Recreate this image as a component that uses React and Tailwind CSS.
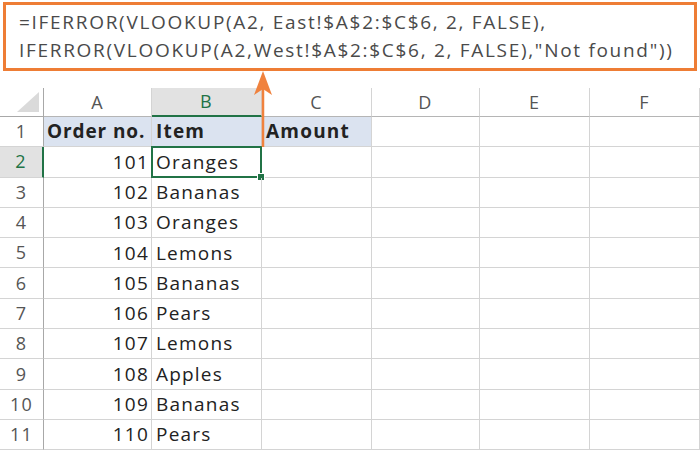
import React from "react";

const cols = ["A", "B", "C", "D", "E", "F"];

const rows = [
  ["101", "Oranges"],
  ["102", "Bananas"],
  ["103", "Oranges"],
  ["104", "Lemons"],
  ["105", "Bananas"],
  ["106", "Pears"],
  ["107", "Lemons"],
  ["108", "Apples"],
  ["109", "Bananas"],
  ["110", "Pears"],
];

const cell = "border-r border-b border-[#d4d4d4] h-[30.3px] flex items-center";

const App = () => {
  return (
    <div className="relative w-[700px] h-[450px] overflow-hidden bg-white font-['Open_Sans',sans-serif]">
      {/* formula box */}
      <div className="mx-[3px] mt-[2px] h-[69px] border-[3px] border-[#ee7d35] px-[13px] pt-[3px] text-[19px] leading-[28px] text-[#4a4a4a] tracking-[1.7px] whitespace-nowrap">
        <div>=IFERROR(VLOOKUP(A2, East!$A$2:$C$6, 2, FALSE),</div>
        <div>IFERROR(VLOOKUP(A2,West!$A$2:$C$6, 2, FALSE),"Not found"))</div>
      </div>

      <div className="mt-[17px] grid grid-cols-[44px_108px_110px_110px_108px_110px_110px] text-[19px] text-[#222] tracking-[1.2px]">
        {/* column header row */}
        <div className="h-[29px] border-r border-b border-[#a8a8a8] flex items-end justify-end pr-[4px] pb-[4px]">
          <svg width="22" height="20" viewBox="0 0 22 20">
            <polygon points="22,0 22,20 0,20" fill="#dadada" />
          </svg>
        </div>
        {cols.map((c) => (
          <div
            key={c}
            className={
              c === "B"
                ? "h-[29px] bg-[#e2e2e2] border-b-[2px] border-[#217346] border-r border-r-[#d4d4d4] flex items-center justify-center text-[18px] text-[#217346]"
                : "h-[29px] border-b border-r border-b-[#b5b5b5] border-r-[#d4d4d4] flex items-center justify-center text-[18px] text-[#555]"
            }
          >
            {c}
          </div>
        ))}

        {/* row 1 */}
        <div className={cell + " justify-center border-r-[#a8a8a8] text-[#555] text-[18px]"}>1</div>
        <div className={cell + " bg-[#dbe3f0] font-bold px-[3px] tracking-[0.9px]"}>Order no.</div>
        <div className={cell + " bg-[#dbe3f0] font-bold px-[4px]"}>Item</div>
        <div className={cell + " bg-[#dbe3f0] font-bold px-[4px]"}>Amount</div>
        <div className={cell}></div>
        <div className={cell}></div>
        <div className={cell}></div>

        {rows.map(([n, item], i) => {
          const r = i + 2;
          const sel = r === 2;
          return (
            <React.Fragment key={r}>
              <div
                className={
                  sel
                    ? "h-[30.3px] flex items-center justify-center bg-[#e2e2e2] border-r-[2px] border-[#217346] border-b border-b-[#d4d4d4] text-[#217346] text-[18px]"
                    : cell + " justify-center border-r-[#a8a8a8] text-[#555] text-[18px]"
                }
              >
                {r}
              </div>
              <div className={cell + " justify-end pr-[2px]"}>{n}</div>
              <div className={cell + " relative px-[4px]"}>
                {item}
                {sel && (
                  <>
                    <div className="absolute -left-[1px] -top-[1px] -right-[1px] -bottom-[1px] border-[2.5px] border-[#217346]" />
                    <div className="absolute -right-[4px] -bottom-[4px] w-[8px] h-[8px] bg-[#217346] border border-white" />
                  </>
                )}
              </div>
              <div className={cell}></div>
              <div className={cell}></div>
              <div className={cell}></div>
              <div className={cell}></div>
            </React.Fragment>
          );
        })}
      </div>

      {/* orange arrow pointing at the formula */}
      <svg className="absolute left-[252px] top-[70px]" width="22" height="80" viewBox="0 0 22 80">
        <line x1="11" y1="14" x2="11" y2="77" stroke="#f0823e" strokeWidth="2.5" />
        <polygon points="11,1 20,25 11,19 2,25" fill="#f0823e" />
      </svg>
    </div>
  );
};

export default App;
